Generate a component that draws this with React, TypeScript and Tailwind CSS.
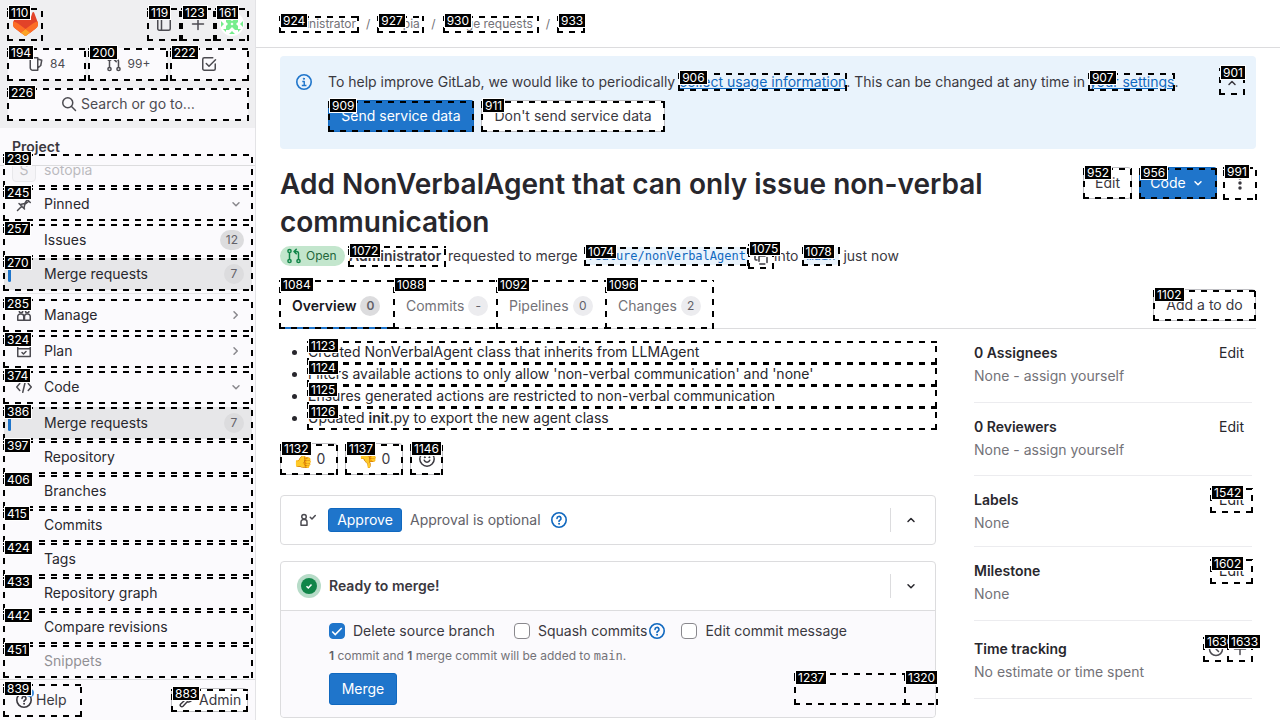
import React from "react";

type IconProps = { children: React.ReactNode; className?: string };

function Icon({ children, className = "" }: IconProps) {
  return (
    <svg
      viewBox="0 0 16 16"
      width="16"
      height="16"
      fill="none"
      stroke="currentColor"
      strokeWidth="1.5"
      strokeLinecap="round"
      strokeLinejoin="round"
      className={"shrink-0 " + className}
      aria-hidden="true"
    >
      {children}
    </svg>
  );
}

const ChevronDown = ({ className }: { className?: string }) => (
  <Icon className={className}><path d="M5 6.75l3 3 3-3" /></Icon>
);
const ChevronUp = ({ className }: { className?: string }) => (
  <Icon className={className}><path d="M5 9.5l3-3 3 3" /></Icon>
);
const ChevronRight = ({ className }: { className?: string }) => (
  <Icon className={className}><path d="M6 4.75L9.25 8 6 11.25" /></Icon>
);
const MergeIcon = ({ className }: { className?: string }) => (
  <Icon className={className}>
    <circle cx="3.5" cy="3" r="1.6" />
    <circle cx="3.5" cy="13" r="1.6" />
    <circle cx="12.5" cy="13" r="1.6" />
    <path d="M3.5 4.75v6.5M12.5 11.25V5.5a2 2 0 0 0-2-2H8.25M10.25 1.25L8 3.5l2.25 2.25" />
  </Icon>
);
const QuestionIcon = ({ className }: { className?: string }) => (
  <Icon className={className}>
    <circle cx="8" cy="8" r="7.2" strokeWidth="1.6" />
    <path d="M6 6.4a2 2 0 1 1 2.9 1.8c-.6.3-.9.6-.9 1.2" strokeWidth="1.6" />
    <circle cx="8" cy="11.8" r=".5" fill="currentColor" strokeWidth="1" />
  </Icon>
);
const PlusIcon = ({ className }: { className?: string }) => (
  <Icon className={className}><path d="M8 2.5v11M2.5 8h11" /></Icon>
);

/* Numbered dashed frame drawn over the element that holds it. */
function Mark({ n }: { n: number }) {
  return (
    <span
      aria-hidden="true"
      className="pointer-events-none absolute -inset-x-px top-0 -bottom-px z-30 bg-[image:repeating-linear-gradient(90deg,#000_0px,#000_6px,transparent_6px,transparent_12px),repeating-linear-gradient(90deg,#000_0px,#000_6px,transparent_6px,transparent_12px),repeating-linear-gradient(0deg,#000_0px,#000_6px,transparent_6px,transparent_12px),repeating-linear-gradient(0deg,#000_0px,#000_6px,transparent_6px,transparent_12px)] [background-size:100%_2px,100%_2px,2px_100%,2px_100%] [background-position:left_top,left_bottom,left_top,right_top] bg-no-repeat"
    >
      <span className="absolute -top-0.5 left-0.5 bg-black px-0.5 font-['Inter','Noto_Sans',sans-serif] text-xs leading-[13px] font-normal whitespace-nowrap text-white outline outline-white">
        {n}
      </span>
    </span>
  );
}

function Count({ children, strong = false }: { children: React.ReactNode; strong?: boolean }) {
  return (
    <span
      className={
        "inline-flex h-5 min-w-5 items-center justify-center rounded-full px-1.5 text-xs text-[#626168] " +
        (strong ? "bg-[#dcdcde]" : "bg-[#ececef]")
      }
    >
      {children}
    </span>
  );
}

type NavProps = {
  n: number;
  label: string;
  icon?: React.ReactNode;
  count?: number;
  active?: boolean;
  chevron?: "down" | "right";
  faded?: boolean;
};

function NavItem({ n, label, icon, count, active, chevron, faded }: NavProps) {
  return (
    <a
      href="#"
      className={
        "relative flex h-8 shrink-0 items-center rounded pr-2 pl-3 text-[#28272d] " +
        (active ? "bg-[#e7e7e9]" : "")
      }
    >
      {active && <span className="absolute top-2 bottom-2 left-1 w-[3px] rounded bg-[#1f75cb]" />}
      <span className="flex w-7 text-[#4c4b51]">{icon}</span>
      <span className={"grow " + (faded ? "opacity-50" : "")}>{label}</span>
      {count !== undefined && <Count strong>{count}</Count>}
      {chevron === "down" && <ChevronDown className="text-[#89888d]" />}
      {chevron === "right" && <ChevronRight className="text-[#89888d]" />}
      <Mark n={n} />
    </a>
  );
}

const codeItems = [
  { n: 397, label: "Repository" },
  { n: 406, label: "Branches" },
  { n: 415, label: "Commits" },
  { n: 424, label: "Tags" },
  { n: 433, label: "Repository graph" },
  { n: 442, label: "Compare revisions" },
  { n: 451, label: "Snippets", faded: true },
];

function Sidebar() {
  return (
    <aside className="flex h-screen w-64 shrink-0 flex-col border-r border-[#e3e3e6] bg-[#fbfafd]">
      <div className="flex h-32 shrink-0 flex-col gap-2 bg-[#efeff1] pt-2 pr-[7px] pl-2 text-[#4c4b51]">
        <div className="flex h-8 items-center">
          <a href="#" aria-label="Homepage" className="relative flex h-8 w-[34px] items-center justify-center">
            <svg viewBox="0 0 25 24" width="25" height="24" aria-hidden="true">
              <path fill="#E24329" d="m24.507 9.5-.034-.09L21.082.562a.896.896 0 0 0-1.694.091l-2.29 7.01H7.825L5.535.653a.898.898 0 0 0-1.694-.09L.451 9.411.416 9.5a6.297 6.297 0 0 0 2.09 7.278l.012.01.03.022 5.16 3.867 2.56 1.935 1.554 1.176a1.051 1.051 0 0 0 1.268 0l1.555-1.176 2.56-1.935 5.197-3.89.014-.01A6.297 6.297 0 0 0 24.507 9.5Z" />
              <path fill="#FC6D26" d="m24.507 9.5-.034-.09a11.44 11.44 0 0 0-4.56 2.051l-7.447 5.632 4.742 3.584 5.197-3.89.014-.01A6.297 6.297 0 0 0 24.507 9.5Z" />
              <path fill="#FCA326" d="m7.707 20.677 2.56 1.935 1.555 1.176a1.051 1.051 0 0 0 1.268 0l1.555-1.176 2.56-1.935-4.743-3.584-4.755 3.584Z" />
              <path fill="#FC6D26" d="M5.01 11.461a11.43 11.43 0 0 0-4.56-2.05L.416 9.5a6.297 6.297 0 0 0 2.09 7.278l.012.01.03.022 5.16 3.867 4.745-3.584-7.444-5.632Z" />
            </svg>
            <Mark n={110} />
          </a>
          <div className="ml-auto flex gap-0.5">
            <button aria-label="Hide sidebar" className="relative flex h-8 w-8 items-center justify-center">
              <Icon><rect x="1.75" y="1.75" width="12.5" height="12.5" rx="1.5" /><path d="M5.5 2v12" /></Icon>
              <Mark n={119} />
            </button>
            <button aria-label="Create new" className="relative flex h-8 w-8 items-center justify-center">
              <PlusIcon />
              <Mark n={123} />
            </button>
            <button aria-label="User menu" className="relative flex h-8 w-8 items-center justify-center">
              <svg viewBox="0 0 24 24" width="24" height="24" aria-hidden="true">
                <circle cx="12" cy="12" r="12" fill="#fff" />
                <path
                  fill="#76ed8d"
                  fillRule="evenodd"
                  d="M5 3l4 4H5zM19 3l-4 4h4zM9 3h6l-3 4zM1 9l3 3-3 3zM23 9l-3 3 3 3zM6 7h3l3 2 3-2h3v3l-2 2 2 2v4h-3l-3-3-3 3H6v-4l2-2-2-2zM12 10.5l-1.5 1.5 1.5 1.5 1.5-1.5zM3 17h3v3zM21 17h-3v3zM9 22l3-3 3 3z"
                />
              </svg>
              <Mark n={161} />
            </button>
          </div>
        </div>
        <div className="grid h-8 grid-cols-3 gap-1 text-xs">
          <a href="#" aria-label="Assigned issues 84" className="relative flex items-center justify-center gap-1.5 rounded bg-[#fbfafd]">
            <Icon><path d="M2.25 1.75h7.5v12.5h-5a2.5 2.5 0 0 1-2.5-2.5zM9.75 3l4 1.2-1 5.3-3 2.5" /></Icon>
            84
            <Mark n={194} />
          </a>
          <a href="#" aria-label="Merge requests 99+" className="relative flex items-center justify-center gap-1.5 rounded bg-[#fbfafd]">
            <MergeIcon />
            99+
            <Mark n={200} />
          </a>
          <a href="#" aria-label="To-Do List" className="relative flex items-center justify-center rounded bg-[#fbfafd]">
            <Icon><path d="M14.25 8v4.75a1.5 1.5 0 0 1-1.5 1.5h-9.5a1.5 1.5 0 0 1-1.5-1.5v-9.5a1.5 1.5 0 0 1 1.5-1.5h8.5M5.25 7.5L8 10.25l6.5-6.5" /></Icon>
            <Mark n={222} />
          </a>
        </div>
        <button className="relative flex h-8 items-center justify-center gap-1 rounded bg-[#fbfafd]">
          <Icon><circle cx="6.75" cy="6.75" r="5" /><path d="M10.5 10.5l4 4" /></Icon>
          Search or go to…
          <Mark n={226} />
        </button>
      </div>

      <div className="relative z-10 h-[38px] shrink-0 border-b border-[#dcdcde] bg-[#fbfafd] px-3 leading-[38px] font-semibold text-[#3a383f]">
        Project
      </div>

      <nav aria-label="Project" className="flex min-h-0 grow flex-col pr-[3px] pl-1">
        <a href="#" className="relative -mt-3 flex h-8 shrink-0 items-center pl-2 text-[#28272d]">
          <span className="flex w-8 opacity-30">
            <span className="flex h-6 w-6 items-center justify-center rounded border border-[#bfbfc3] bg-[#ececef]">S</span>
          </span>
          <span className="opacity-30">sotopia</span>
          <Mark n={239} />
        </a>
        <div className="mt-0.5 flex flex-col gap-1">
          <NavItem
            n={245}
            label="Pinned"
            chevron="down"
            icon={<Icon><path d="M1.5 14.5l4.5-4.5M3 7.5L8.5 13M4.25 8.5l4.5-1L11 4M8 12l.75-3.5L12.5 5.5M9.75 2l4.5 4.5" /></Icon>}
          />
          <div className="flex flex-col gap-0.5">
            <NavItem n={257} label="Issues" count={12} />
            <NavItem n={270} label="Merge requests" count={7} active />
          </div>
        </div>
        <div className="mx-3 mt-[3px] mb-[5px] border-t border-[#e7e7e9]" />
        <div className="flex flex-col gap-1">
          <NavItem
            n={285}
            label="Manage"
            chevron="right"
            icon={<Icon><circle cx="5" cy="4" r="1.75" /><circle cx="11.25" cy="4" r="1.75" /><path d="M1.75 13.25V9.5A2.5 2.5 0 0 1 4.25 7h1A2.5 2.5 0 0 1 7.75 9.5v3.75zM8.5 13.25h5.75V9.5a2.5 2.5 0 0 0-2.5-2.5h-1a2.5 2.5 0 0 0-2.25 2.5z" /></Icon>}
          />
          <NavItem
            n={324}
            label="Plan"
            chevron="right"
            icon={<Icon><path d="M1.75 3h12.5v10.5H1.75zM1.75 5.75h12.5M4.5 1v2M11.5 1v2M6 9.5l1.5 1.5 2.5-2.5" /></Icon>}
          />
          <NavItem
            n={374}
            label="Code"
            chevron="down"
            icon={<Icon><path d="M3.75 4.5L.75 8l3 3.5M12.25 4.5l3 3.5-3 3.5M9.25 2.75l-2.5 10.5" /></Icon>}
          />
          <div className="flex flex-col gap-0.5">
            <NavItem n={386} label="Merge requests" count={7} active />
            {codeItems.map((item) => <NavItem key={item.n} {...item} />)}
          </div>
        </div>
      </nav>

      <div className="flex h-[41px] shrink-0 items-center justify-between border-t border-[#dcdcde] pr-[7px] pl-1 text-[#3a383f]">
        <button className="relative flex h-8 w-[77px] items-center gap-1 pl-3">
          <QuestionIcon />
          <span className="absolute top-[5px] left-[22px] h-2 w-2 rounded-full bg-[#428fdc]" />
          Help
          <Mark n={839} />
        </button>
        <a href="#" className="relative flex h-6 w-[77px] items-center gap-1 rounded border border-[#bfbfc3] bg-white pl-[7px]">
          <Icon><path d="M1.75 14.25a1.6 1.6 0 0 1 0-2.25l4.5-4.25a4 4 0 0 1 5.25-5l-2.25 2.5 1.5 1.5 2.5-2a4 4 0 0 1-5 5L4 14.25a1.6 1.6 0 0 1-2.25 0z" /></Icon>
          Admin
          <Mark n={883} />
        </a>
      </div>
    </aside>
  );
}

const crumbs = [
  { n: 924, label: "Administrator", width: "min-w-[78px]" },
  { n: 927, label: "sotopia", width: "min-w-[45px]" },
  { n: 930, label: "Merge requests", width: "min-w-[94px]" },
  { n: 933, label: "!124", width: "min-w-[26px]" },
];

const tabs = [
  { n: 1084, label: "Overview", count: "0", width: "w-[114px]", active: true },
  { n: 1088, label: "Commits", count: "-", width: "w-[103px]" },
  { n: 1092, label: "Pipelines", count: "0", width: "w-[109px]" },
  { n: 1096, label: "Changes", count: "2", width: "w-[107px]" },
];

const changes = [
  { n: 1123, text: "Created NonVerbalAgent class that inherits from LLMAgent" },
  { n: 1124, text: "Filters available actions to only allow 'non-verbal communication' and 'none'" },
  { n: 1125, text: "Ensures generated actions are restricted to non-verbal communication" },
  { n: 1126, text: <>Updated <strong className="font-semibold">init</strong>.py to export the new agent class</> },
];

const outlineButton =
  "relative flex items-center justify-center rounded border border-[#bfbfc3] bg-white text-[#3a383f]";
const blueButton =
  "relative flex items-center justify-center rounded-[3px] border border-[#1068bf] bg-[#1f75cb] text-white";

function CheckOption({ label, checked = false, className = "" }: { label: string; checked?: boolean; className?: string }) {
  return (
    <label className={"flex items-center gap-2 whitespace-nowrap " + className}>
      <span className="relative flex h-4 w-4">
        <input
          type="checkbox"
          defaultChecked={checked}
          className="peer h-4 w-4 appearance-none rounded border border-[#89888d] bg-white checked:border-[#1f75cb] checked:bg-[#1f75cb]"
        />
        <svg viewBox="0 0 16 16" className="pointer-events-none absolute inset-0 hidden h-4 w-4 peer-checked:block" fill="none" stroke="#fff" strokeWidth="1.6" aria-hidden="true">
          <path d="M3.25 8.5l3 3L12.75 5" />
        </svg>
      </span>
      {label}
    </label>
  );
}

function SideSection({ title, text, pad, children }: { title: string; text: string; pad: string; children: React.ReactNode }) {
  return (
    <section className={"border-b border-[#ececef] " + pad}>
      <div className="flex h-6 items-center justify-between">
        <h2 className="font-semibold text-[#28272d]">{title}</h2>
        {children}
      </div>
      <p className="leading-[22px] text-[#737278]">{text}</p>
    </section>
  );
}

function EditButton({ n }: { n?: number }) {
  return (
    <button className="relative h-6 px-2 text-[#28272d]">
      Edit
      {n !== undefined && <Mark n={n} />}
    </button>
  );
}

function Details() {
  return (
    <aside className="w-[278px] shrink-0">
      <SideSection title="0 Assignees" text="None - assign yourself" pad="pt-3 pb-[15px]"><EditButton /></SideSection>
      <SideSection title="0 Reviewers" text="None - assign yourself" pad="pt-3 pb-3.5"><EditButton /></SideSection>
      <SideSection title="Labels" text="None" pad="pt-3 pb-3"><EditButton n={1542} /></SideSection>
      <SideSection title="Milestone" text="None" pad="pt-3 pb-[15px]"><EditButton n={1602} /></SideSection>
      <SideSection title="Time tracking" text="No estimate or time spent" pad="pt-4 pb-[15px]">
        <div className="flex text-[#4c4b51]">
          <button aria-label="Set estimate" className="relative flex h-6 w-6 items-center justify-center">
            <Icon><circle cx="8" cy="8" r="6.5" /><path d="M8 4.5V8l2.5 2.5" /></Icon>
            <Mark n={1630} />
          </button>
          <button aria-label="Add time entry" className="relative flex h-6 w-6 items-center justify-center">
            <PlusIcon />
            <Mark n={1633} />
          </button>
        </div>
      </SideSection>
    </aside>
  );
}

function CardToggle({ label, children }: { label: string; children: React.ReactNode }) {
  return (
    <div className="ml-auto flex h-6 items-center border-l border-[#dcdcde] pl-2">
      <button aria-label={label} className="flex h-6 w-6 items-center justify-center text-[#28272d]">{children}</button>
    </div>
  );
}

function Discussion() {
  return (
    <div className="min-w-0 grow">
      <ul className="mt-3 ml-7 list-disc leading-[22px] text-[#28272d]">
        {changes.map((c) => (
          <li key={c.n} className="relative">
            {c.text}
            <Mark n={c.n} />
          </li>
        ))}
      </ul>

      <div className="mt-3.5 flex gap-[7px]">
        <button className={outlineButton + " h-8 w-[58px] gap-1"}>
          <span className="text-base">👍</span> 0
          <Mark n={1132} />
        </button>
        <button className={outlineButton + " h-8 w-[58px] gap-1"}>
          <span className="text-base">👎</span> 0
          <Mark n={1137} />
        </button>
        <button aria-label="Add reaction" className={outlineButton + " h-8 w-[33px]"}>
          <Icon>
            <circle cx="8" cy="8" r="7.2" />
            <path d="M5.25 9.25a2.9 2.9 0 0 0 5.5 0" />
            <circle cx="5.75" cy="6.25" r=".5" fill="currentColor" strokeWidth="1" />
            <circle cx="10.25" cy="6.25" r=".5" fill="currentColor" strokeWidth="1" />
          </Icon>
          <Mark n={1146} />
        </button>
      </div>

      <section className="mt-5 flex h-[50px] items-center rounded border border-[#dcdcde] pr-3 pl-[19px]">
        <Icon className="text-[#4c4b51]">
          <circle cx="4" cy="4.75" r="2.25" />
          <path d="M1 13.25V10a2.5 2.5 0 0 1 2.5-2.5h1A2.5 2.5 0 0 1 7 10v3.25zM10.25 5.25l1.75 1.75 3.25-3.5" />
        </Icon>
        <button className={blueButton + " ml-3 h-6 w-[74px]"}>Approve</button>
        <span className="mx-2 min-w-[133px] text-[#626168]">Approval is optional</span>
        <button aria-label="About this feature" className="text-[#1068bf]"><QuestionIcon /></button>
        <CardToggle label="Collapse approvals"><ChevronUp /></CardToggle>
      </section>

      <section className="mt-4 rounded border border-[#dcdcde]">
        <div className="flex h-12 items-center pr-3 pl-4">
          <span className="flex h-6 w-6 items-center justify-center rounded-full bg-[#b7dcc8]">
            <svg viewBox="0 0 16 16" width="16" height="16" aria-hidden="true">
              <circle cx="8" cy="8" r="8" fill="#108548" />
              <path d="M5.5 8.2l1.8 1.8 3.2-3.6" fill="none" stroke="#fff" strokeWidth="1.5" />
            </svg>
          </span>
          <h2 className="ml-2 font-semibold text-[#3a383f]">Ready to merge!</h2>
          <CardToggle label="Expand merge details"><ChevronDown /></CardToggle>
        </div>
        <div className="rounded-b border-t border-[#dcdcde] bg-[#fbfafd] pt-2.5 pb-3 pl-12 text-[#3a383f]">
          <div className="flex items-center gap-4">
            <CheckOption label="Delete source branch" checked className="min-w-[169px]" />
            <div className="flex items-center gap-0.5">
              <CheckOption label="Squash commits" />
              <button aria-label="What is squashing?" className="text-[#1068bf]"><QuestionIcon /></button>
            </div>
            <CheckOption label="Edit commit message" />
          </div>
          <p className="mt-[5px] text-xs leading-5 text-[#737278]">
            <strong className="font-semibold text-[#626168]">1</strong> commit and{" "}
            <strong className="font-semibold text-[#626168]">1</strong> merge commit will be added to{" "}
            <span className="font-['DejaVu_Sans_Mono',monospace]">main</span>.
          </p>
          <div className="mt-[7px] flex h-8 justify-between">
            <button className={blueButton + " h-8 w-[68px]"}>Merge</button>
            <div className="-mr-0.5 flex">
              <div className="relative h-[31px] w-[110px]"><Mark n={1237} /></div>
              <div className="relative h-[31px] w-8"><Mark n={1320} /></div>
            </div>
          </div>
        </div>
      </section>
    </div>
  );
}

export default function App() {
  return (
    <div className="flex h-screen overflow-hidden bg-white font-['Inter','Noto_Sans',sans-serif] text-sm text-[#3a383f]">
      <Sidebar />
      <div className="min-w-0 grow">
        <nav aria-label="Breadcrumb" className="flex h-12 items-center border-b border-[#dcdcde] px-6 text-xs text-[#737278]">
          {crumbs.map((c, i) => (
            <React.Fragment key={c.n}>
              {i > 0 && <span className="mx-2">/</span>}
              <a href="#" className={"relative " + c.width}>
                {c.label}
                <Mark n={c.n} />
              </a>
            </React.Fragment>
          ))}
        </nav>

        <main className="px-6 pt-2">
          <section className="flex items-start rounded bg-[#e9f3fc] px-4 pt-4 pb-[17px]">
            <Icon className="mt-0.5 text-[#1f75cb]">
              <circle cx="8" cy="8" r="7.2" strokeWidth="1.6" />
              <path d="M7 7.5h1.25v3.75M6.5 11.5h3.25" strokeLinecap="square" strokeWidth="1.4" />
              <circle cx="7.9" cy="4.75" r=".6" fill="currentColor" strokeWidth="1" />
            </Icon>
            <div className="ml-4 grow">
              <p className="leading-5">
                To help improve GitLab, we would like to periodically{" "}
                <a href="#" className="relative text-[#1068bf] underline">collect usage information<Mark n={906} /></a>. This can be changed at any time in{" "}
                <a href="#" className="relative text-[#1068bf] underline">your settings<Mark n={907} /></a>.
              </p>
              <div className="mt-2 flex gap-[7px]">
                <button className={blueButton + " h-8 w-[146px]"}>Send service data<Mark n={909} /></button>
                <button className={outlineButton + " h-8 w-[184px]"}>Don't send service data<Mark n={911} /></button>
              </div>
            </div>
            <button aria-label="Collapse" className="relative -mt-1 -mr-1 flex h-[26px] w-6 items-center justify-center pt-1">
              <ChevronUp />
              <Mark n={901} />
            </button>
          </section>

          <header className="mt-4 flex items-start justify-between gap-6">
            <h1 className="w-[760px] text-[28px] leading-[38px] font-semibold text-[#28272d]">
              Add NonVerbalAgent that can only issue non-verbal communication
            </h1>
            <div className="mt-0.5 flex gap-[7px]">
              <button className={outlineButton + " h-8 w-[49px]"}>Edit<Mark n={952} /></button>
              <button className={blueButton + " h-8 w-[78px] gap-1"}>Code<ChevronDown /><Mark n={956} /></button>
              <button aria-label="Actions" className="relative flex h-8 w-8 items-center justify-center">
                <svg viewBox="0 0 16 16" width="16" height="16" fill="currentColor" aria-hidden="true">
                  <circle cx="8" cy="3" r="1.75" /><circle cx="8" cy="8" r="1.75" /><circle cx="8" cy="13" r="1.75" />
                </svg>
                <Mark n={991} />
              </button>
            </div>
          </header>

          <div className="mt-[5px] flex h-5 items-center">
            <span className="mr-1 flex h-5 w-[65px] items-center gap-1 rounded-full bg-[#c3e6cd] px-1.5 text-xs text-[#24663b]">
              <MergeIcon className="text-[#108548]" />
              Open
            </span>
            <a href="#" className="relative min-w-24 font-semibold">Administrator<Mark n={1072} /></a>
            <span className="mx-[3px] min-w-[134px]">requested to merge</span>
            <a href="#" className="relative min-w-[163px] rounded-sm bg-[#e9f3fc] px-0.5 font-['DejaVu_Sans_Mono',monospace] text-xs leading-[18px] text-[#1068bf]">
              feature/nonVerbalAgent
              <Mark n={1074} />
            </a>
            <button aria-label="Copy branch name" className="relative mx-px flex h-6 w-6 items-center justify-center">
              <Icon className="mt-1"><path d="M4 10H3a1 1 0 0 1-1-1V3a1 1 0 0 1 1-1h6a1 1 0 0 1 1 1v1" /><rect x="6" y="6" width="8" height="8" rx="1" strokeDasharray="5 3" /></Icon>
              <Mark n={1075} />
            </button>
            <span className="mr-1 min-w-6">into</span>
            <a href="#" className="relative rounded-sm bg-[#e9f3fc] px-1 font-['DejaVu_Sans_Mono',monospace] text-xs leading-[18px] text-[#1068bf]">
              main
              <Mark n={1078} />
            </a>
            <span className="ml-1">just now</span>
          </div>

          <div className="mt-[15px] flex h-12 justify-between border-b border-[#dcdcde]">
            <div className="-mb-px flex">
              {tabs.map((t) => (
                <a
                  key={t.n}
                  href="#"
                  className={
                    "relative flex items-center gap-1 border-b-2 pt-[3px] pl-3 " +
                    t.width +
                    (t.active ? " border-[#1f75cb] font-semibold text-[#18171d]" : " border-transparent text-[#737278]")
                  }
                >
                  {t.label}
                  <Count strong={t.active}>{t.count}</Count>
                  {/* The bottom edge of the frame sits on the tab's underline. */}
                  <span className="absolute inset-x-0 -top-px -bottom-px"><Mark n={t.n} /></span>
                </a>
              ))}
            </div>
            <button className={outlineButton + " mt-2 h-8 w-[103px]"}>Add a to do<Mark n={1102} /></button>
          </div>

          <div className="flex gap-[38px] pr-1">
            <Discussion />
            <Details />
          </div>
        </main>
      </div>
    </div>
  );
}
